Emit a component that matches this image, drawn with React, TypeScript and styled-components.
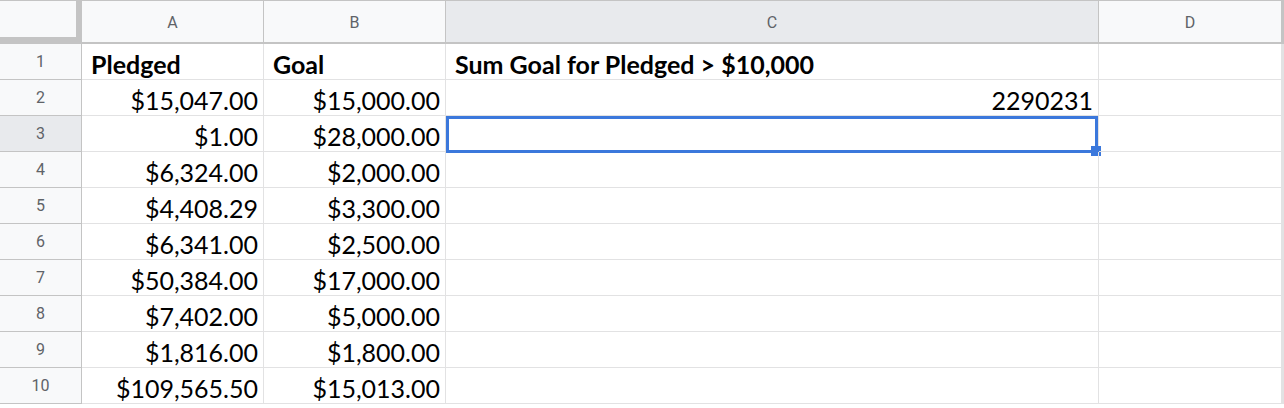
import React from "react";
import styled, { createGlobalStyle } from "styled-components";

const Global = createGlobalStyle`
  html, body { margin: 0; padding: 0; background: #ffffff; }
  body { font-family: Lato, "Open Sans", sans-serif; overflow: hidden; }
`;

const HEADER_BORDER = "#c4c4c4";
const GRID = "#e2e2e3";
const SELECT = "#3b78dc";

const Sheet = styled.div`
  display: grid;
  grid-template-columns: 82px 182px 182px 653px 183px 1fr;
  grid-auto-rows: 36px;
  grid-template-rows: 44px;
  width: 1284px;
`;

const Corner = styled.div`
  box-sizing: border-box;
  background: #f8f9fa;
  border-top: 1px solid ${HEADER_BORDER};
  border-right: 6px solid ${HEADER_BORDER};
  border-bottom: 7px solid ${HEADER_BORDER};
`;

const ColHead = styled.div<{ $active?: boolean }>`
  box-sizing: border-box;
  display: flex;
  align-items: center;
  justify-content: center;
  background: ${(p) => (p.$active ? "#e8eaed" : "#f8f9fa")};
  border-top: 1px solid ${HEADER_BORDER};
  border-right: 1px solid ${HEADER_BORDER};
  border-bottom: 2px solid ${HEADER_BORDER};
  font-family: Roboto, "Liberation Sans", sans-serif;
  font-size: 16px;
  color: #5f6368;
  padding-top: 1px;
`;

const HeadTail = styled.div`
  box-sizing: border-box;
  background: #f8f9fa;
  border-top: 1px solid ${HEADER_BORDER};
  border-left: 2px solid ${HEADER_BORDER};
  border-bottom: 2px solid ${HEADER_BORDER};
`;

const RowHead = styled.div<{ $active?: boolean }>`
  box-sizing: border-box;
  display: flex;
  align-items: center;
  justify-content: center;
  background: ${(p) => (p.$active ? "#e8eaed" : "#f8f9fa")};
  border-right: 1px solid ${HEADER_BORDER};
  border-bottom: 1px solid ${HEADER_BORDER};
  font-family: Roboto, "Liberation Sans", sans-serif;
  font-size: 16px;
  color: #5f6368;
`;

const Cell = styled.div<{ $bold?: boolean; $right?: boolean }>`
  box-sizing: border-box;
  display: flex;
  align-items: flex-end;
  justify-content: ${(p) => (p.$right ? "flex-end" : "flex-start")};
  padding: 0 5px 0 9px;
  border-right: 1px solid ${GRID};
  border-bottom: 1px solid ${GRID};
  font-family: Lato, "Open Sans", sans-serif;
  font-size: 25px;
  line-height: 30px;
  font-weight: ${(p) => (p.$bold ? 700 : 400)};
  color: #000;
  white-space: nowrap;
  overflow: visible;
  position: relative;
`;

const TailCell = styled.div`
  box-sizing: border-box;
  border-left: 2px solid ${GRID};
  border-bottom: 1px solid ${GRID};
`;

const Selection = styled.div`
  position: absolute;
  left: 0;
  top: 0;
  right: 0;
  bottom: -2px;
  border: 3px solid ${SELECT};
  pointer-events: none;
`;

const Handle = styled.div`
  position: absolute;
  right: -6px;
  bottom: -6px;
  width: 10px;
  height: 10px;
  background: ${SELECT};
  box-sizing: border-box;
`;

const pledged = [
  "$15,047.00",
  "$1.00",
  "$6,324.00",
  "$4,408.29",
  "$6,341.00",
  "$50,384.00",
  "$7,402.00",
  "$1,816.00",
  "$109,565.50",
];
const goal = [
  "$15,000.00",
  "$28,000.00",
  "$2,000.00",
  "$3,300.00",
  "$2,500.00",
  "$17,000.00",
  "$5,000.00",
  "$1,800.00",
  "$15,013.00",
];

export default function App() {
  return (
    <>
      <Global />
      <Sheet>
        <Corner />
        <ColHead>A</ColHead>
        <ColHead>B</ColHead>
        <ColHead $active>C</ColHead>
        <ColHead>D</ColHead>
        <HeadTail />

        <RowHead>1</RowHead>
        <Cell $bold>Pledged</Cell>
        <Cell $bold>Goal</Cell>
        <Cell $bold>Sum Goal for Pledged &gt; $10,000</Cell>
        <Cell />
        <TailCell />

        {pledged.map((p, i) => {
          const row = i + 2;
          return (
            <React.Fragment key={row}>
              <RowHead $active={row === 3}>{row}</RowHead>
              <Cell $right>{p}</Cell>
              <Cell $right>{goal[i]}</Cell>
              <Cell $right>
                {row === 2 ? "2290231" : ""}
                {row === 3 && (
                  <Selection>
                    <Handle />
                  </Selection>
                )}
              </Cell>
              <Cell />
              <TailCell />
            </React.Fragment>
          );
        })}
      </Sheet>
    </>
  );
}
